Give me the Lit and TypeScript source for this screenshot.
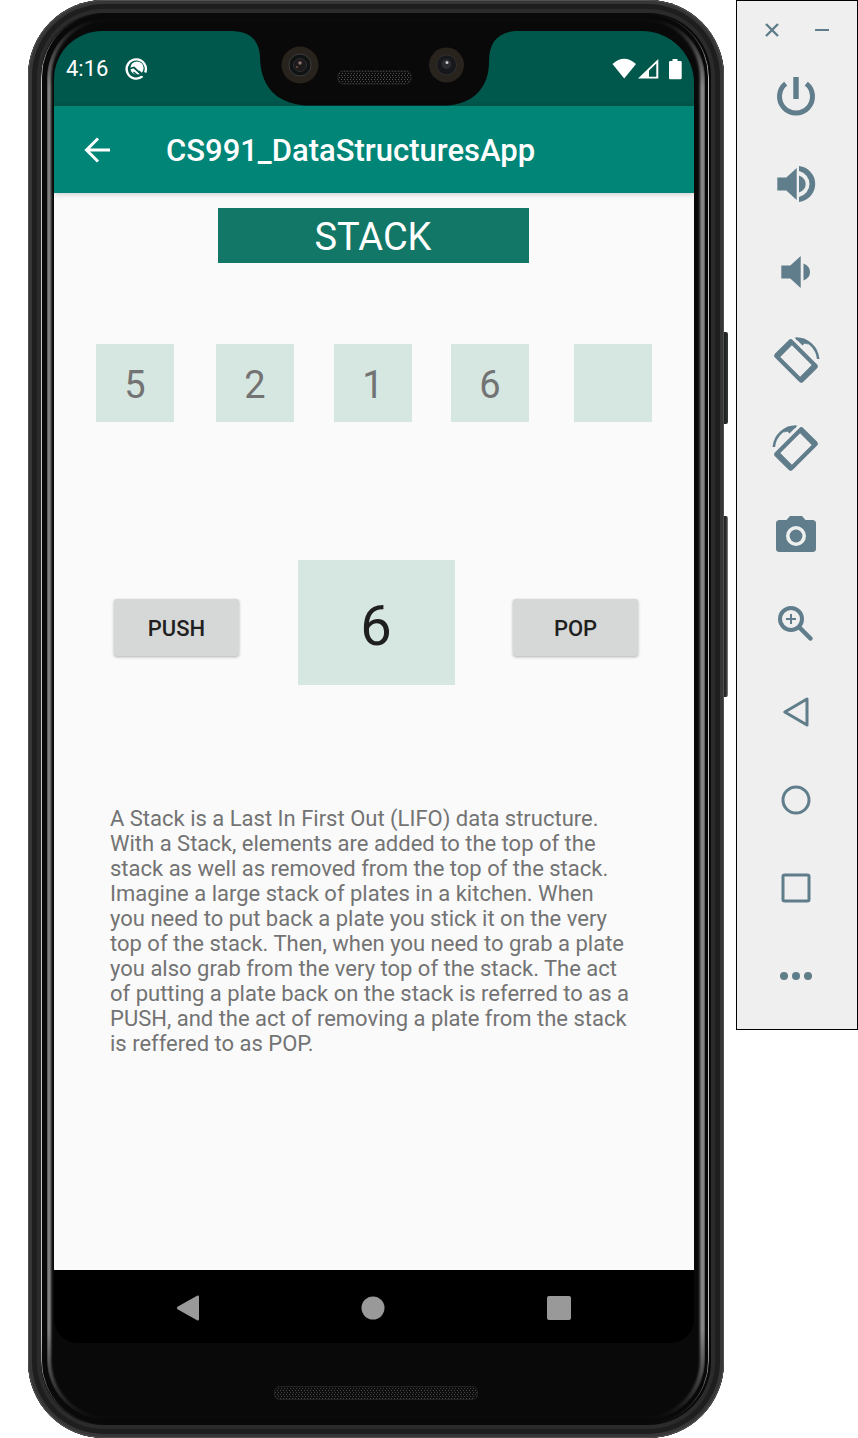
import { LitElement, html, css, svg } from "lit";
import { customElement, state } from "lit/decorators.js";

const SLOTS = 5;

const speaker = (d: string) => svg`<path d=${d} />`;

const rotated = svg`
  <g transform="rotate(45 24 25)">
    <path fill-rule="evenodd"
      d="M7 12.500H41a3 3 0 0 1 3 3V34.500a3 3 0 0 1-3 3H7a3 3 0 0 1-3-3V15.500A3 3 0 0 1 7 12.500zM10 16.800V33.200H38V16.800z" />
  </g>
  <path d="M24 2.600A22.500 22.500 0 0 1 46.200 23" fill="none" stroke="currentColor" stroke-width="2.600" />
  <path d="M22.500 1.400L30.500 9.500L32.500 7.500L36 8.500L33 3z" />`;

const panelTools = [
  {
    label: "Power",
    art: svg`<path d="M13.700 11.600A16.500 16.500 0 1 0 34.300 11.600" fill="none" stroke="currentColor" stroke-width="5" />
      <rect x="21.300" y="5" width="5.400" height="22" />`,
  },
  {
    label: "Volume up",
    art: svg`${speaker("M5.300 17.500H14.300L24.700 8V40L14.300 30.500H5.300z")}
      <path d="M27 15.500Q33.700 18 33.700 24T27 32.500z" />
      <path d="M27 6A18.100 18.100 0 0 1 27 42V37A13.300 13.300 0 0 0 27 11z" />`,
  },
  {
    label: "Volume down",
    art: svg`${speaker("M9.300 17.500H18.300L28.700 8V40L18.300 30.500H9.300z")}
      <path d="M31.500 15.500Q38 18 38 24T31.500 32.500z" />`,
  },
  { label: "Rotate left", art: rotated },
  { label: "Rotate right", art: svg`<g transform="translate(48 0) scale(-1 1)">${rotated}</g>` },
  {
    label: "Take screenshot",
    art: svg`<path fill-rule="evenodd" d="M7.500 8H14.500L18 4H30L33.500 8H40.500A3.500 3.500 0 0 1 44 11.500V36.500A3.500 3.500 0 0 1 40.500 40H7.500A3.500 3.500 0 0 1 4 36.500V11.500A3.500 3.500 0 0 1 7.500 8zM24 14a10 10 0 1 0 0 20a10 10 0 1 0 0-20z" />
      <circle cx="24" cy="24" r="6.400" />`,
  },
  {
    label: "Zoom",
    art: svg`<g fill="none" stroke="currentColor">
      <circle cx="19" cy="19" r="11" stroke-width="4" />
      <path d="M14 19H24M19 14V24" stroke-width="2" />
      <path d="M28 28L38.500 38.500" stroke-width="4.500" stroke-linecap="round" /></g>`,
  },
  {
    label: "Back",
    art: svg`<path d="M12.800 24L35 11V37z" fill="none" stroke="currentColor" stroke-width="3" stroke-linejoin="round" />`,
  },
  {
    label: "Home",
    art: svg`<circle cx="24" cy="24" r="13" fill="none" stroke="currentColor" stroke-width="3" />`,
  },
  {
    label: "Overview",
    art: svg`<rect x="11" y="11" width="26" height="26" rx="1.500" fill="none" stroke="currentColor" stroke-width="3" />`,
  },
  {
    label: "More",
    art: svg`<circle cx="12" cy="24" r="4" /><circle cx="24" cy="24" r="4" /><circle cx="36" cy="24" r="4" />`,
  },
];

@customElement("emulator-panel")
export class EmulatorPanel extends LitElement {
  static styles = css`
    :host {
      display: block;
      box-sizing: border-box;
      border: 1px solid #000;
      background: #efefef;
      padding-bottom: 9px;
    }
    .window {
      display: flex;
      justify-content: center;
      height: 51px;
      padding-top: 6px;
      box-sizing: border-box;
    }
    .window button { width: 50px; }
    .tools { display: flex; flex-direction: column; }
    .tools button { height: 88px; padding-right: 2px; }
    button {
      display: flex;
      align-items: center;
      justify-content: center;
      border: 0;
      padding: 0;
      background: none;
      color: #607d8b;
      cursor: pointer;
    }
    svg { display: block; fill: currentColor; overflow: visible; }
  `;

  render() {
    return html`
      <div class="window">
        <button aria-label="Close">
          <svg width="16" height="16" viewBox="0 0 16 16">
            <path d="M2 2L14 14M14 2L2 14" stroke="currentColor" stroke-width="2.400" />
          </svg>
        </button>
        <button aria-label="Minimize">
          <svg width="16" height="16" viewBox="0 0 16 16"><rect x="1" y="7" width="14" height="2" /></svg>
        </button>
      </div>
      <div class="tools">
        ${panelTools.map(
          (t) => html`<button aria-label=${t.label}>
            <svg width="48" height="48" viewBox="0 0 48 48">${t.art}</svg>
          </button>`
        )}
      </div>
    `;
  }
}

@customElement("stack-screen")
export class StackScreen extends LitElement {
  @state() private items = ["5", "2", "1", "6"];
  @state() private value = "6";

  static styles = css`
    :host {
      display: flex;
      flex-direction: column;
      background: #fafafa;
      font-family: Roboto, "Liberation Sans", sans-serif;
      color: #737373;
    }
    .bar {
      display: flex;
      align-items: center;
      gap: 54px;
      height: 87px;
      padding: 0 28px;
      background: #008577;
      color: #fff;
      box-shadow: 0 1px 6px rgba(0, 0, 0, 0.2);
    }
    .bar button {
      border: 0;
      padding: 0;
      background: none;
      color: inherit;
      cursor: pointer;
    }
    .bar svg { display: block; }
    h1 { margin: 0; padding-top: 2px; font-size: 31px; line-height: 40px; font-weight: 500; }
    .title {
      align-self: center;
      box-sizing: border-box;
      width: 311px;
      max-width: 100%;
      margin: 15px 2px 0 0;
      padding-top: 4px;
      background: #127766;
      color: #fff;
      font-size: 38px;
      line-height: 51px;
      font-weight: 400;
      text-align: center;
    }
    .slots {
      display: grid;
      grid-template-columns: 120fr 118fr 117fr 123fr 78px;
      margin: 81px 42px 0;
      padding: 0;
      list-style: none;
    }
    .slot {
      width: 78px;
      height: 78px;
      background: #d6e7e2;
      font-size: 38px;
      line-height: 82px;
      text-align: center;
    }
    .controls {
      display: flex;
      align-items: center;
      justify-content: space-between;
      margin: 138px 56px 0 60px;
    }
    .action {
      width: 125px;
      height: 57px;
      border: 0;
      border-radius: 3px;
      padding: 2px 0 0;
      margin-top: 10px;
      background: #d6d7d7;
      box-shadow: 0 1px 3px rgba(0, 0, 0, 0.3);
      color: #1f1f1f;
      font: 500 22px/26px Roboto, "Liberation Sans", sans-serif;
      cursor: pointer;
    }
    .value {
      box-sizing: border-box;
      width: 157px;
      height: 125px;
      border: 0;
      padding: 6px 0 0;
      background: #d6e7e2;
      color: #1f1f1f;
      font: 400 56px/66px Roboto, "Liberation Sans", sans-serif;
      text-align: center;
    }
    .about {
      margin: 121px 62px 40px 56px;
      font-size: 22px;
      line-height: 25px;
    }
  `;

  private push() {
    if (this.items.length < SLOTS && this.value) this.items = [...this.items, this.value];
  }

  private pop() {
    this.items = this.items.slice(0, -1);
    this.value = this.items[this.items.length - 1] ?? "";
  }

  render() {
    return html`
      <header class="bar">
        <button aria-label="Navigate up">
          <svg width="30" height="30" viewBox="0 0 30 30" fill="none" stroke="#fff" stroke-width="3">
            <path d="M28 15H5M16 3.500L4.500 15L16 26.500" />
          </svg>
        </button>
        <h1>CS991_DataStructuresApp</h1>
      </header>
      <h2 class="title">STACK</h2>
      <ol class="slots">
        ${Array.from({ length: SLOTS }, (_, i) => html`<li class="slot">${this.items[i] ?? ""}</li>`)}
      </ol>
      <div class="controls">
        <button class="action" @click=${this.push}>PUSH</button>
        <input
          class="value"
          aria-label="Value"
          .value=${this.value}
          @input=${(e: Event) => (this.value = (e.target as HTMLInputElement).value)}
        />
        <button class="action" @click=${this.pop}>POP</button>
      </div>
      <p class="about">
        A Stack is a Last In First Out (LIFO) data structure. With a Stack, elements are added to
        the top of the stack as well as removed from the top of the stack. Imagine a large stack of
        plates in a kitchen. When you need to put back a plate you stick it on the very top of the
        stack. Then, when you need to grab a plate you also grab from the very top of the stack.
        The act of putting a plate back on the stack is referred to as a PUSH, and the act of
        removing a plate from the stack is reffered to as POP.
      </p>
    `;
  }
}

@customElement("app-root")
export class AppRoot extends LitElement {
  static styles = css`
    :host {
      display: flex;
      align-items: flex-start;
      gap: 12px;
      box-sizing: border-box;
      min-height: 100vh;
      padding-left: 28px;
      background: #fff;
      font-family: Roboto, "Liberation Sans", sans-serif;
    }
    .phone {
      position: relative;
      flex: 1;
      display: flex;
      flex-direction: column;
      box-sizing: border-box;
      min-height: 100vh;
      padding: 31px 30px 0 26px;
      border-radius: 76px;
      background: #090909;
      box-shadow: inset 0 0 0 1px #505050, inset 0 0 0 4px #363636, inset 0 0 0 9px #1e1e1e,
        inset 0 0 0 13px #2b2b2b;
    }
    .ring {
      position: absolute;
      box-sizing: border-box;
      pointer-events: none;
      mask-image: linear-gradient(transparent 0, #000 70px, #000 calc(100% - 90px), transparent 100%);
    }
    .outer { inset: 13px 15px 13px 13px; border: 1px solid #c4c4c4; border-radius: 64px; }
    .inner {
      inset: 18px 19px 18px 19px;
      border: solid #8c8c8c;
      border-width: 3px 5px 3px 4px;
      border-radius: 60px;
      filter: blur(1px);
    }
    .key {
      position: absolute;
      left: 100%;
      width: 4px;
      border-radius: 0 2px 2px 0;
      background: linear-gradient(90deg, #1c1c1c, #343838);
    }
    .power { top: 332px; height: 92px; }
    .volume { top: 516px; height: 181px; background: linear-gradient(90deg, #262626 50%, #8a8a8a); }
    .status {
      position: relative;
      display: flex;
      align-items: center;
      height: 75px;
      padding: 0 12px;
      border-radius: 48px 52px 0 0;
      background: #00574b;
      color: #fff;
      font-size: 22px;
      line-height: 26px;
    }
    .status svg { display: block; }
    .agent { margin-left: 17px; }
    .signals { margin-left: auto; }
    .notch { position: absolute; left: 50%; top: 0; margin-left: -141px; }
    .screen { position: relative; flex: 1; }
    .nav {
      display: grid;
      grid-template-columns: repeat(3, 1fr);
      height: 73px;
      padding: 2px 42px 0 41px;
      box-sizing: border-box;
      border-radius: 0 0 24px 24px;
      background: #000;
    }
    .nav button {
      display: flex;
      align-items: center;
      justify-content: center;
      border: 0;
      padding: 0;
      background: none;
      cursor: pointer;
    }
    .nav svg { fill: #999; }
    .chin { display: flex; justify-content: center; height: 95px; }
    .chin svg { margin: 43px 0 0 3px; }
    .panel { flex: 0 0 122px; }
  `;

  render() {
    return html`
      <main class="phone">
        <span class="key power"></span>
        <span class="key volume"></span>
        <span class="ring outer"></span>
        <span class="ring inner"></span>
        <div class="status">
          <svg class="notch" width="282" height="75" viewBox="0 0 282 75">
            <defs>
              <pattern id="mesh" width="3" height="4" patternUnits="userSpaceOnUse">
                <rect width="3" height="4" fill="#0c0c0c" />
                <rect width="1" height="1" x="0" y="0" fill="#585858" />
                <rect width="1" height="1" x="1" y="2" fill="#4c4c4c" />
              </pattern>
            </defs>
            <path fill="#090909" d="M0 0C18 1 26 10 27 25C27 54 42 72 72 74.500H214C241 73 256 56 256 31C256 12 264 2 282 0z" />
            <circle cx="67" cy="34" r="18.500" fill="#28231d" />
            <circle cx="67" cy="34" r="11" fill="#111214" stroke="#3d3d3d" />
            <circle cx="67" cy="34" r="6.500" fill="#1d1a1b" stroke="#2e2e30" />
            <circle cx="67" cy="32" r="1.800" fill="#8a706c" />
            <circle cx="64" cy="36" r="1" fill="#7a5040" />
            <rect x="105" y="40" width="73" height="13" rx="5" fill="url(#mesh)" stroke="#242424" />
            <circle cx="213.500" cy="34" r="17.500" fill="#28231d" />
            <circle cx="213.500" cy="34" r="10" fill="#17181b" stroke="#303030" />
            <circle cx="213.500" cy="33" r="5" fill="#2b2b30" />
            <circle cx="214" cy="31.500" r="1.500" fill="#c8c8c8" />
          </svg>
          <time>4:16</time>
          <svg class="agent" width="24" height="24" viewBox="0 0 24 24">
            <path d="M17.600 19.200A9.600 9.600 0 1 1 20.200 15.500" fill="none" stroke="#fff" stroke-width="2.400" />
            <circle cx="12" cy="11" r="6.600" fill="#fff" />
            <path d="M5 11.500L9 10.500L17.500 18.500" fill="none" stroke="#00574b" stroke-width="1.800" />
            <path d="M8.500 15L12.500 18.500" fill="none" stroke="#00574b" stroke-width="1.500" />
            <path d="M14 14L20 20" fill="none" stroke="#00574b" stroke-width="1.500" />
          </svg>
          <svg class="signals" width="70" height="22" viewBox="0 0 70 22">
            <g fill="#fff">
              <path d="M.500 6Q12-4.500 24 6L12.200 20.500z" />
              <path fill-rule="evenodd" d="M26 20.500L46.300 1V20.500zM37 12.500V18.700H44.300V5.500z" />
              <path d="M60.500 1H65.500V3H68.500Q69.700 3 69.700 4.200V20Q69.700 21.300 68.500 21.300H58.300Q57 21.300 57 20V4.200Q57 3 58.300 3H60.500z" />
            </g>
          </svg>
        </div>
        <stack-screen class="screen"></stack-screen>
        <nav class="nav">
          <button aria-label="Back">
            <svg width="26" height="26" viewBox="0 0 26 26">
              <path d="M2.500 11.800L22 .800Q24 0 24 2V24Q24 26 22 25.200L2.500 14.200Q1 13 2.500 11.800z" />
            </svg>
          </button>
          <button aria-label="Home">
            <svg width="24" height="24" viewBox="0 0 24 24"><circle cx="12" cy="12" r="11.500" /></svg>
          </button>
          <button aria-label="Overview">
            <svg width="24" height="24" viewBox="0 0 24 24"><rect width="24" height="24" rx="2" /></svg>
          </button>
        </nav>
        <div class="chin">
          <svg width="204" height="14" viewBox="0 0 204 14">
            <defs>
              <pattern id="grille" width="3" height="4" patternUnits="userSpaceOnUse">
                <rect width="3" height="4" fill="#0e0e0e" />
                <rect width="1" height="1" x="0" y="0" fill="#484848" />
                <rect width="1" height="1" x="1" y="2" fill="#404040" />
              </pattern>
            </defs>
            <rect x=".500" y=".500" width="203" height="13" rx="5" fill="url(#grille)" stroke="#222" />
          </svg>
        </div>
      </main>
      <emulator-panel class="panel"></emulator-panel>
    `;
  }
}
